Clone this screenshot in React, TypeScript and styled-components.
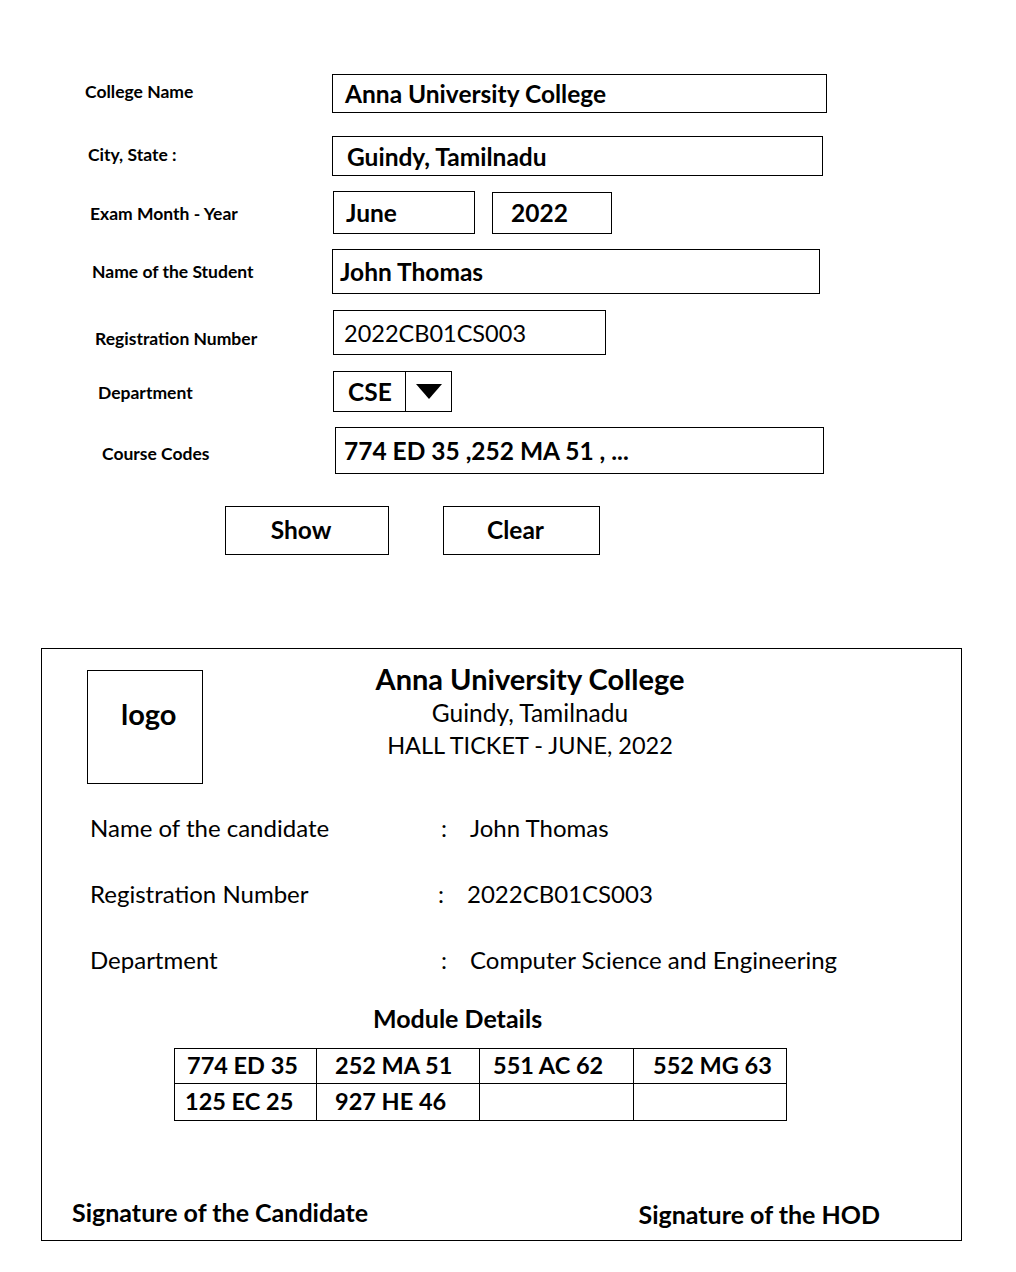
import * as React from 'react';
import styled, { createGlobalStyle } from 'styled-components';

const GlobalStyle = createGlobalStyle`
  body {
    margin: 0;
    background: #ffffff;
    color: #000000;
    font-family: Lato, "Open Sans", sans-serif;
  }
`;

const Page = styled.div`
  width: 1016px;
  height: 1272px;
  box-sizing: border-box;
  padding-top: 74px;
  background: #ffffff;
`;

const Row = styled.div<{ $top: number }>`
  display: flex;
  align-items: center;
  margin-top: ${(p) => p.$top}px;
`;

const Label = styled.div<{ $indent: number; $dy?: number }>`
  box-sizing: border-box;
  width: 332px;
  padding-left: ${(p) => p.$indent}px;
  padding-top: ${(p) => Math.max(0, (p.$dy || 0) * 2)}px;
  padding-bottom: ${(p) => Math.max(0, -(p.$dy || 0) * 2)}px;
  font-size: 17.5px;
  font-weight: 700;
`;

const Field = styled.div<{
  $w: number;
  $h: number;
  $pl: number;
  $ml?: number;
  $regular?: boolean;
}>`
  box-sizing: border-box;
  display: flex;
  align-items: center;
  width: ${(p) => p.$w}px;
  height: ${(p) => p.$h}px;
  margin-left: ${(p) => p.$ml || 0}px;
  padding-left: ${(p) => p.$pl}px;
  border: 1px solid #000;
  font-size: ${(p) => (p.$regular ? 23.5 : 24.5)}px;
  font-weight: ${(p) => (p.$regular ? 400 : 700)};
  white-space: nowrap;
`;

const Select = styled.div`
  box-sizing: border-box;
  display: flex;
  width: 119px;
  height: 41px;
  margin-left: 1px;
  border: 1px solid #000;
`;

const SelectValue = styled.div`
  display: flex;
  align-items: center;
  width: 72px;
  padding-left: 14px;
  box-sizing: border-box;
  border-right: 1px solid #000;
  font-size: 24.5px;
  font-weight: 700;
`;

const SelectArrow = styled.div`
  flex: 1;
  display: flex;
  justify-content: center;
  padding-top: 12px;
  &::after {
    content: '';
    width: 0;
    height: 0;
    border-left: 13px solid transparent;
    border-right: 13px solid transparent;
    border-top: 15px solid #000;
  }
`;

const ButtonRow = styled.div`
  display: flex;
  gap: 54px;
  margin-top: 32px;
  padding-left: 225px;
`;

const Button = styled.button<{ $w: number }>`
  box-sizing: border-box;
  width: ${(p) => p.$w}px;
  height: 49px;
  border: 1px solid #000;
  background: #fff;
  font-family: inherit;
  font-size: 24.5px;
  font-weight: 700;
  color: #000;
  padding: 0 12px 3px 0;
`;

const Ticket = styled.div`
  box-sizing: border-box;
  display: flex;
  flex-direction: column;
  align-items: flex-start;
  width: 921px;
  height: 593px;
  margin: 93px 0 0 41px;
  border: 1px solid #000;
  padding-top: 13px;
`;

const Header = styled.div`
  display: flex;
  align-items: flex-start;
`;

const Logo = styled.div`
  box-sizing: border-box;
  width: 116px;
  height: 114px;
  margin: 8px 0 0 45px;
  border: 1px solid #000;
  padding: 25px 0 0 33px;
  font-size: 29px;
  font-weight: 700;
`;

const TitleBlock = styled.div`
  width: 400px;
  margin-left: 127px;
  text-align: center;
`;

const TitleLine = styled.div<{ $bold?: boolean; $size: number; $h: number }>`
  font-size: ${(p) => p.$size}px;
  font-weight: ${(p) => (p.$bold ? 700 : 400)};
  line-height: ${(p) => p.$h}px;
`;

const InfoList = styled.div`
  margin-top: 10px;
  padding-left: 48px;
`;

const InfoRow = styled.div<{ $shift?: number }>`
  display: grid;
  grid-template-columns: ${(p) => 351 + (p.$shift || 0)}px 29px auto;
  align-items: center;
  height: 66px;
  font-size: 24px;
`;

const ModuleTitle = styled.div`
  margin: 11px 0 0 331px;
  font-size: 25px;
  font-weight: 700;
  line-height: 30px;
`;

const Table = styled.table`
  margin: 15px 0 0 132px;
  border-collapse: collapse;
  table-layout: fixed;
  font-size: 23.5px;
  font-weight: 700;
`;

const Cell = styled.td<{ $w: number; $pl: number }>`
  box-sizing: border-box;
  width: ${(p) => p.$w}px;
  padding: 0 0 2px ${(p) => p.$pl}px;
  border: 1px solid #000;
  white-space: nowrap;
`;

const TRow = styled.tr<{ $h: number }>`
  height: ${(p) => p.$h}px;
`;

const Signatures = styled.div`
  display: flex;
  justify-content: space-between;
  align-items: flex-end;
  align-self: stretch;
  margin-top: auto;
  padding: 0 81px 11px 30px;
  font-size: 25px;
  font-weight: 700;
  line-height: 30px;
`;

const Sign = styled.div<{ $lift?: number }>`
  margin-bottom: ${(p) => p.$lift || 0}px;
`;

const colW = [142, 163, 154, 153];
const modules = [
  [
    ['774 ED 35', 12],
    ['252 MA 51', 18],
    ['551 AC 62', 13],
    ['552 MG 63', 19],
  ],
  [
    ['125 EC 25', 10],
    ['927 HE 46', 18],
    ['', 0],
    ['', 0],
  ],
] as const;

export default function App() {
  return (
    <Page>
      <GlobalStyle />
      <Row $top={0}>
        <Label $indent={85} $dy={-2}>
          College Name
        </Label>
        <Field $w={495} $h={39} $pl={12}>
          Anna University College
        </Field>
      </Row>
      <Row $top={23}>
        <Label $indent={88} $dy={-2}>
          City, State :
        </Label>
        <Field $w={491} $h={40} $pl={14}>
          Guindy, Tamilnadu
        </Field>
      </Row>
      <Row $top={15}>
        <Label $indent={90} $dy={1}>
          Exam Month - Year
        </Label>
        <Field $w={142} $h={43} $pl={12} $ml={1}>
          June
        </Field>
        <Field $w={120} $h={42} $pl={18} $ml={17}>
          2022
        </Field>
      </Row>
      <Row $top={15}>
        <Label $indent={92}>Name of the Student</Label>
        <Field $w={488} $h={45} $pl={7}>
          John Thomas
        </Field>
      </Row>
      <Row $top={16}>
        <Label $indent={95} $dy={6}>
          Registration Number
        </Label>
        <Field $w={273} $h={45} $pl={10} $ml={1} $regular>
          2022CB01CS003
        </Field>
      </Row>
      <Row $top={16}>
        <Label $indent={98} $dy={1}>
          Department
        </Label>
        <Select>
          <SelectValue>CSE</SelectValue>
          <SelectArrow />
        </Select>
      </Row>
      <Row $top={15}>
        <Label $indent={102} $dy={3}>
          Course Codes
        </Label>
        <Field $w={489} $h={47} $pl={8} $ml={3}>
          774 ED 35 ,252 MA 51 , ...
        </Field>
      </Row>
      <ButtonRow>
        <Button $w={164}>Show</Button>
        <Button $w={157}>Clear</Button>
      </ButtonRow>

      <Ticket>
        <Header>
          <Logo>logo</Logo>
          <TitleBlock>
            <TitleLine $bold $size={29} $h={34}>
              Anna University College
            </TitleLine>
            <TitleLine $size={24.5} $h={33}>
              Guindy, Tamilnadu
            </TitleLine>
            <TitleLine $size={23.5} $h={32}>
              HALL TICKET - JUNE, 2022
            </TitleLine>
          </TitleBlock>
        </Header>
        <InfoList>
          <InfoRow>
            <span>Name of the candidate</span>
            <span>:</span>
            <span>John Thomas</span>
          </InfoRow>
          <InfoRow $shift={-3}>
            <span>Registration Number</span>
            <span>:</span>
            <span>2022CB01CS003</span>
          </InfoRow>
          <InfoRow>
            <span>Department</span>
            <span>:</span>
            <span>Computer Science and Engineering</span>
          </InfoRow>
        </InfoList>
        <ModuleTitle>Module Details</ModuleTitle>
        <Table>
          <tbody>
            {modules.map((row, r) => (
              <TRow key={r} $h={r === 0 ? 35 : 37}>
                {row.map(([code, pl], c) => (
                  <Cell key={c} $w={colW[c]} $pl={pl}>
                    {code}
                  </Cell>
                ))}
              </TRow>
            ))}
          </tbody>
        </Table>
        <Signatures>
          <Sign $lift={2}>Signature of the Candidate</Sign>
          <Sign>Signature of the HOD</Sign>
        </Signatures>
      </Ticket>
    </Page>
  );
}
